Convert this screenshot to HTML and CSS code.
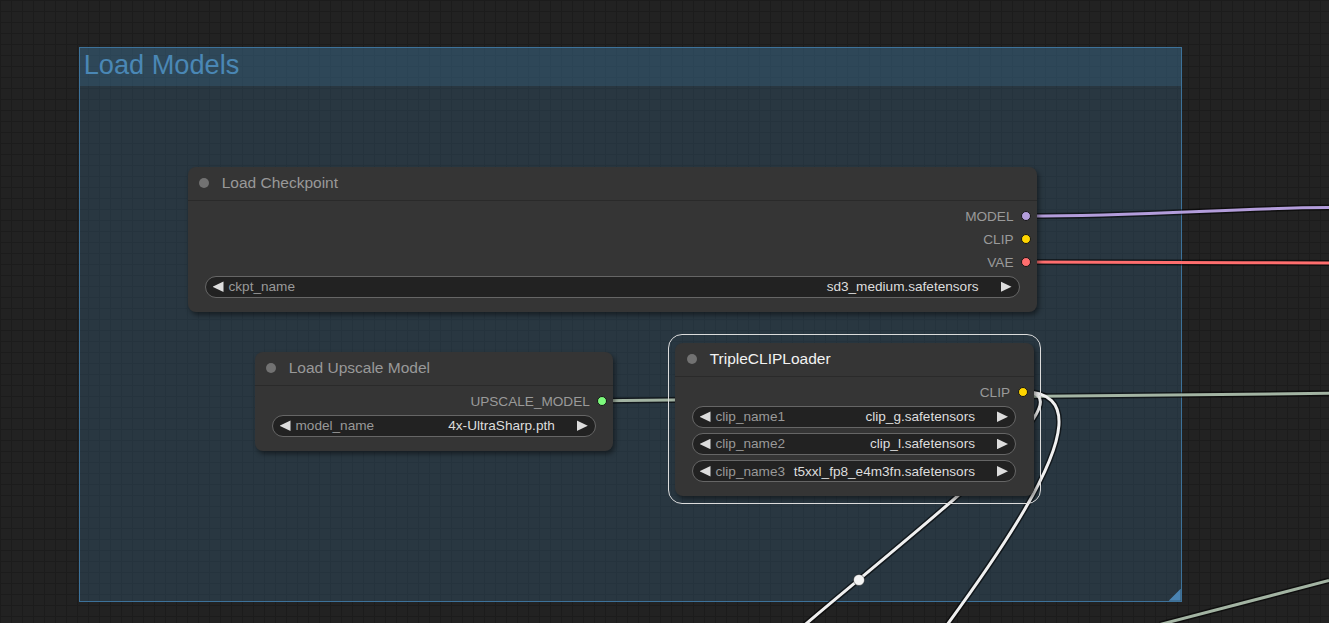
FILE: index.html
```html
<!DOCTYPE html>
<html>
<head>
<meta charset="utf-8">
<title>Load Models</title>
<link rel="stylesheet" href="styles.css">
</head>
<body>
<div class="canvas">
  <div class="group">
    <div class="group-title">Load Models</div>
    <div class="group-resize"></div>
  </div>

  <svg class="links" width="1329" height="623" viewBox="0 0 1329 623">
    <g class="link-outline">
      <path d="M1026 216 C1150 216 1230 208 1329 207.5"/>
      <path d="M1026 262 C1150 262 1230 263 1329 263"/>
      <path d="M602 400.7 C800 400.7 1000 394.5 1329 393.3"/>
      <path d="M1160 624.5 L1329 580.5"/>
      <path d="M1022.7 391.7 C1147 391.7 570 768 695 768"/>
      <path d="M1022.7 391.7 C1240 391.7 402 1187 623 1187"/>
    </g>
    <path class="link l-model" d="M1026 216 C1150 216 1230 208 1329 207.5"/>
    <path class="link l-vae" d="M1026 262 C1150 262 1230 263 1329 263"/>
    <path class="link l-up" d="M602 400.7 C800 400.7 1000 394.5 1329 393.3"/>
    <path class="link l-up" d="M1160 624.5 L1329 580.5"/>
    <path class="link l-white" d="M1022.7 391.7 C1147 391.7 570 768 695 768"/>
    <path class="link l-white" d="M1022.7 391.7 C1240 391.7 402 1187 623 1187"/>
    <circle class="link-dot" cx="859" cy="580" r="5.5"/>
  </svg>

  <div class="node n-ckpt">
    <div class="node-title"><span class="title-dot"></span>Load Checkpoint</div>
    <div class="node-body">
      <div class="out-row">MODEL<span class="slot s-model"></span></div>
      <div class="out-row">CLIP<span class="slot s-clip"></span></div>
      <div class="out-row">VAE<span class="slot s-vae"></span></div>
      <div class="widget"><span class="arrow arrow-l"></span><span class="w-label">ckpt_name</span><span class="w-value">sd3_medium.safetensors</span><span class="arrow arrow-r"></span></div>
    </div>
  </div>

  <div class="node n-upscale">
    <div class="node-title"><span class="title-dot"></span>Load Upscale Model</div>
    <div class="node-body">
      <div class="out-row">UPSCALE_MODEL<span class="slot s-up"></span></div>
      <div class="widget"><span class="arrow arrow-l"></span><span class="w-label">model_name</span><span class="w-value">4x-UltraSharp.pth</span><span class="arrow arrow-r"></span></div>
    </div>
  </div>

  <div class="node n-clip selected">
    <div class="node-title"><span class="title-dot"></span>TripleCLIPLoader</div>
    <div class="node-body">
      <div class="out-row">CLIP<span class="slot s-clip"></span></div>
      <div class="widget"><span class="arrow arrow-l"></span><span class="w-label">clip_name1</span><span class="w-value">clip_g.safetensors</span><span class="arrow arrow-r"></span></div>
      <div class="widget"><span class="arrow arrow-l"></span><span class="w-label">clip_name2</span><span class="w-value">clip_l.safetensors</span><span class="arrow arrow-r"></span></div>
      <div class="widget"><span class="arrow arrow-l"></span><span class="w-label">clip_name3</span><span class="w-value">t5xxl_fp8_e4m3fn.safetensors</span><span class="arrow arrow-r"></span></div>
    </div>
  </div>
</div>
</body>
</html>
```

FILE: styles.css
```css
* { box-sizing: border-box; }

html, body {
  margin: 0;
  padding: 0;
  background: #222;
  overflow: hidden;
}

body {
  font-family: "Liberation Sans", Arial, sans-serif;
}

.canvas {
  position: relative;
  width: 1329px;
  height: 623px;
  overflow: hidden;
  background-color: #222;
  background-image:
    linear-gradient(to right, #1c1c1c 1px, transparent 1px),
    linear-gradient(to bottom, #1c1c1c 1px, transparent 1px);
  background-size: 11px 11px;
}

/* group */
.group {
  position: absolute;
  left: 78.7px;
  top: 46.7px;
  width: 1103px;
  height: 555px;
  background: rgba(63, 120, 158, 0.25);
  border: 1px solid #3d729a;
}

.group-title {
  height: 38px;
  background: rgba(63, 120, 158, 0.25);
  color: #4a87b5;
  font-size: 27.2px;
  line-height: 34px;
  padding-left: 4px;
  white-space: nowrap;
}

.group-resize {
  position: absolute;
  right: 0;
  bottom: 0;
  width: 12px;
  height: 12px;
  background: #4a84b3;
  clip-path: polygon(100% 0, 100% 100%, 0 100%);
}

/* links */
.links {
  position: absolute;
  left: 0;
  top: 0;
}

.link-outline path {
  fill: none;
  stroke: rgba(0, 0, 0, 0.55);
  stroke-width: 6;
}

.link {
  fill: none;
  stroke-width: 3;
}

.l-model { stroke: #b39ddb; }
.l-vae { stroke: #ff6e6e; }
.l-up { stroke: #a3b4a3; }
.l-white { stroke: #f0f0f0; }

.link-dot {
  fill: #f4f4f4;
  stroke: rgba(0, 0, 0, 0.4);
  stroke-width: 1;
}

/* nodes */
.node {
  position: absolute;
  background: #353535;
  border-radius: 8px;
  box-shadow: 2px 3px 5px rgba(0, 0, 0, 0.45);
}

.n-ckpt { left: 188px; top: 166.7px; width: 849px; }
.n-upscale { left: 255px; top: 351.7px; width: 358.3px; }
.n-clip { left: 675px; top: 342.7px; width: 358.5px; }

.node.selected::after {
  content: "";
  position: absolute;
  left: -6.7px;
  top: -8.4px;
  right: -7.7px;
  bottom: -7.6px;
  border: 1.2px solid #dcdcdc;
  border-radius: 14px;
  pointer-events: none;
}

.node-title {
  height: 34px;
  display: flex;
  align-items: center;
  border-bottom: 1px solid #2a2a2a;
  color: #999;
  font-size: 15.5px;
  padding-left: 11px;
  white-space: nowrap;
}

.n-clip .node-title { padding-left: 12px; }

.node.selected .node-title { color: #f2f2f2; }

.title-dot {
  width: 10px;
  height: 10px;
  border-radius: 50%;
  background: #727272;
  margin-right: 12.7px;
  flex: none;
}

.node-body {
  padding: 4px 0 14px;
}

.out-row {
  height: 23px;
  display: flex;
  justify-content: flex-end;
  align-items: center;
  padding-right: 6px;
  font-size: 13.6px;
  color: #9a9a9a;
}

.slot {
  width: 10px;
  height: 10px;
  border-radius: 50%;
  margin-left: 7.5px;
  border: 1px solid #151515;
  flex: none;
}

.s-model { background: #b39ddb; }
.s-clip { background: #ffd500; }
.s-vae { background: #ff6e6e; }
.s-up { background: #7cf97c; }

.widget {
  height: 22px;
  margin: 2px 17.5px 0 16.5px;
  background: #222;
  border: 1px solid #666;
  border-radius: 11px;
  display: flex;
  align-items: center;
  padding: 0 7px;
  font-size: 13.6px;
  white-space: nowrap;
}

.widget + .widget { margin-top: 5.3px; }

.arrow {
  width: 11px;
  height: 10.5px;
  background: #ddd;
  flex: none;
}

.arrow-l {
  clip-path: polygon(0 50%, 100% 0, 100% 100%);
  margin-right: 5px;
}

.arrow-r {
  clip-path: polygon(0 0, 100% 50%, 0 100%);
  margin-left: 22px;
}

.w-label { color: #999; }

.w-value {
  margin-left: auto;
  color: #ddd;
}
```
